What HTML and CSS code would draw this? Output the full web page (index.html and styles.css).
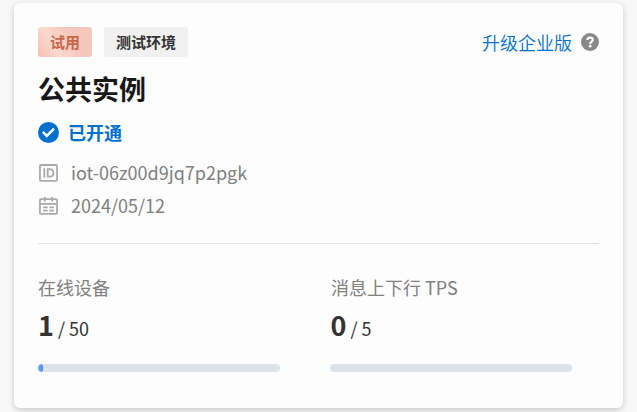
FILE: index.html
```html
<!DOCTYPE html>
<html lang="zh-CN">
<head>
<meta charset="utf-8">
<title>公共实例</title>
<link rel="stylesheet" href="styles.css">
</head>
<body>
<main class="card">
  <header class="top">
    <div class="tags"><span class="tag trial">试用</span><span class="tag env">测试环境</span></div>
    <div class="upgrade">
      <a class="link">升级企业版</a>
      <svg class="help" viewBox="0 0 18 18"><circle cx="9" cy="9" r="9" fill="#888"/><path d="M6.3 7.1C6.3 5.4 7.4 4.6 9.1 4.6S11.8 5.5 11.8 6.9C11.8 8.6 9.2 8.7 9.2 10.9" fill="none" stroke="#fff" stroke-width="2.1"/><circle cx="9.2" cy="13.2" r="1.35" fill="#fff"/></svg>
    </div>
  </header>
  <h1 class="title">公共实例</h1>
  <div class="status">
    <svg class="check" viewBox="0 0 21 21"><circle cx="10.5" cy="10.5" r="10.5" fill="#0070cc"/><path d="M4.8 9.9l4 4 7.2-7.2" fill="none" stroke="#fff" stroke-width="2.5"/></svg>
    <span>已开通</span>
  </div>
  <div class="info">
    <svg class="icon" viewBox="0 0 19 18" fill="none" stroke="#aaa" stroke-width="1.8"><rect x=".95" y="1" width="17.1" height="15.8" rx="1"/><path d="M5.3 4.3v9.2M8.7 5.2v7.4h1.8c2.4 0 3.9-1.3 3.9-3.7s-1.5-3.7-3.9-3.7z"/></svg>
    <span>iot-06z00d9jq7p2pgk</span>
  </div>
  <div class="info">
    <svg class="icon" viewBox="0 0 19 18" fill="none" stroke="#aaa" stroke-width="1.8"><rect x=".95" y="2.1" width="17.1" height="14.8" rx="1"/><path d="M1 6.9h17M5.8 0v4.6M13.2 0v4.6M4.1 10.3h4.6M10.3 10.3h4.6M4.1 13.7h4.6M10.3 13.7h4.6"/></svg>
    <span>2024/05/12</span>
  </div>
  <section class="metrics">
    <div class="metric">
      <div class="label">在线设备</div>
      <div class="value"><strong>1</strong> / 50</div>
      <div class="bar"><div class="fill" style="width:2%"></div></div>
    </div>
    <div class="metric">
      <div class="label">消息上下行 TPS</div>
      <div class="value"><strong>0</strong> / 5</div>
      <div class="bar"></div>
    </div>
  </section>
</main>
</body>
</html>
```
FILE: styles.css
```css
* { box-sizing: border-box; }
body {
  margin: 0;
  height: 412px;
  padding: 3px 14px 4px;
  overflow: hidden;
  background: #f8f8f8;
  font-family: "Noto Sans CJK SC", sans-serif;
  font-size: 18px;
  color: #333;
}
.card {
  height: 405px;
  padding: 24px;
  border-radius: 6px;
  background: #fdfdfd;
  box-shadow: 0 2px 6px rgba(0, 0, 0, .2);
}
.top, .tags, .upgrade, .status, .info { display: flex; align-items: center; }
.top { justify-content: space-between; height: 30px; }
.tags { gap: 12px; }
.tag {
  height: 30px;
  padding: 0 12px;
  border-radius: 3px;
  font-size: 15px;
  line-height: 30px;
  font-weight: 700;
}
.trial { color: #c8664b; background: linear-gradient(60deg, #f5beb0 0%, #f9d8ce 30%, #f5c6ba 65%, #f6c9be 100%); }
.env { background: #f0f0f0; }
.upgrade { gap: 9px; }
.link { color: #0070cc; line-height: 30px; font-weight: 350; }
.help { width: 18px; height: 18px; }
.title { margin: 12px 0 0; font-size: 27px; line-height: 40px; font-weight: 700; color: #181818; }
.status { margin-top: 9px; height: 28px; gap: 9px; font-weight: 700; color: #0070cc; line-height: 28px; }
.check { width: 21px; height: 21px; }
.info { height: 33px; gap: 13px; padding-left: 1px; color: #808080; line-height: 33px; }
.status + .info { margin-top: 10px; }
.icon { width: 19px; height: 18px; }
.metrics {
  display: grid;
  grid-template-columns: 242px 242px;
  gap: 50px;
  margin-top: 21px;
  padding-top: 29px;
  border-top: 1px solid #e0e0e0;
}
.label { color: #808080; line-height: 28px; }
.value { margin-top: 4px; line-height: 40px; white-space: pre; }
.metric + .metric .label { padding-left: 1px; }
.value strong { font-size: 27px; line-height: 40px; }
.bar { height: 8px; margin-top: 16px; border-radius: 4px; background: #dce3eb; overflow: hidden; }
.metric + .metric .value { padding-left: .5px; }
.fill { height: 8px; border-radius: 3px; background: linear-gradient(90deg, #80acef, #438fe4); }
```
